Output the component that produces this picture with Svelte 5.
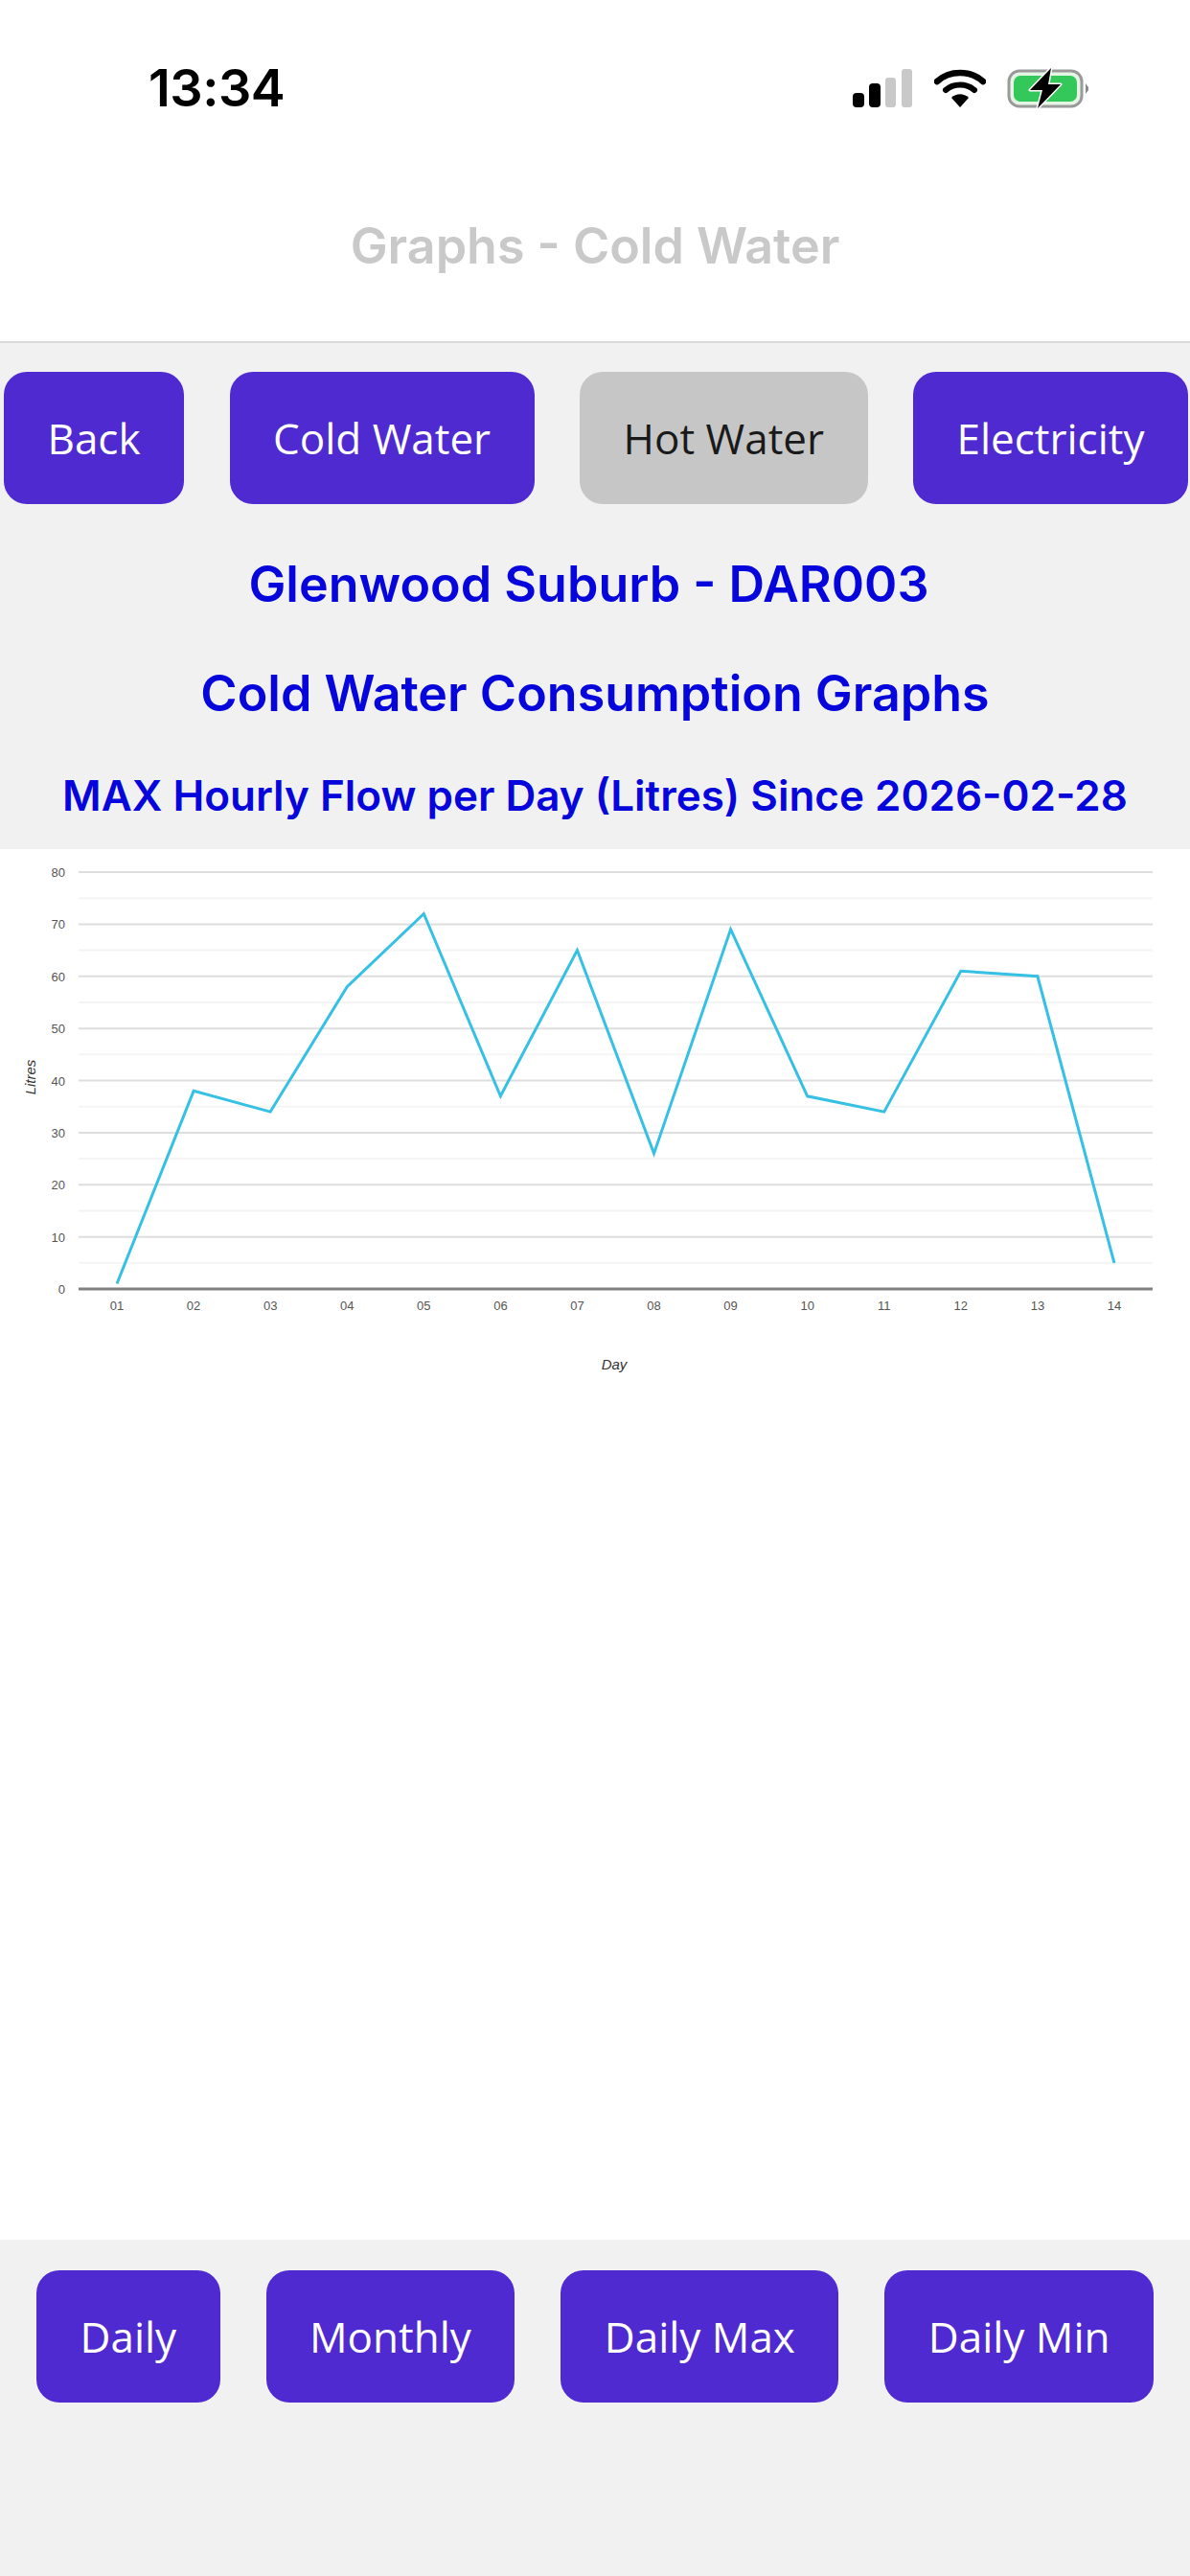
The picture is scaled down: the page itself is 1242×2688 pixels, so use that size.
<script>
	const topButtons = [
		{ label: 'Back' },
		{ label: 'Cold Water' },
		{ label: 'Hot Water', inactive: true },
		{ label: 'Electricity' }
	]
	const bottomButtons = ['Daily', 'Monthly', 'Daily Max', 'Daily Min']

	const flow = [1, 38, 34, 58, 72, 37, 65, 26, 69, 37, 34, 61, 60, 5]
	const days = flow.map((_, i) => String(i + 1).padStart(2, '0'))

	// plot area in svg pixels
	const left = 82
	const right = 1203
	const top = 24
	const bottom = 459
	const maxY = 80

	const yPos = v => bottom - (v / maxY) * (bottom - top)
	const xPos = i => left + ((right - left) / flow.length) * (i + 0.5)

	const majors = [0, 10, 20, 30, 40, 50, 60, 70, 80]
	const minors = [5, 15, 25, 35, 45, 55, 65, 75]
	const points = flow.map((v, i) => `${xPos(i)},${yPos(v)}`).join(' ')
</script>

<main>
	<div class="status">
		<span class="time">13:34</span>
		<div class="status-icons">
			<svg width="64" height="42" viewBox="0 0 64 42">
				<rect x="1" y="26" width="12" height="15" rx="4" fill="#000" />
				<rect x="18" y="16" width="12" height="25" rx="4" fill="#000" />
				<rect x="35" y="10" width="11" height="31" rx="3" fill="#c9c9c9" />
				<rect x="52" y="1" width="11" height="40" rx="3" fill="#c9c9c9" />
			</svg>
			<svg width="54" height="42" viewBox="0 0 54 42">
				<path d="M3 14 C16 2 38 2 51 14" fill="none" stroke="#000" stroke-width="6.500" stroke-linecap="round" />
				<path d="M12 23 C20 15.500 34 15.500 42 23" fill="none" stroke="#000" stroke-width="6" stroke-linecap="round" />
				<path d="M18 31 C23 26 31 26 36 31 L27 41 Z" fill="#000" />
			</svg>
			<svg width="88" height="44" viewBox="0 0 88 44">
				<rect x="2" y="4" width="76" height="37" rx="11" fill="#e4f5e6" stroke="#9a9a9a" stroke-width="3" />
				<rect x="7" y="9" width="66" height="27" rx="7" fill="#34c759" />
				<path d="M82 17 L85 21 L85 24 L82 28 Z" fill="#8a8a8a" />
				<path d="M46 1 L24 24 L37 24 L32 43 L56 18 L43 18 Z" fill="#000" stroke="#fff" stroke-width="3" stroke-linejoin="round" paint-order="stroke" />
			</svg>
		</div>
	</div>

	<header>Graphs - Cold Water</header>

	<section class="intro">
		<nav class="top-nav">
			{#each topButtons as btn}
				<button class:inactive={btn.inactive}>{btn.label}</button>
			{/each}
		</nav>
		<h1>Glenwood Suburb - DAR003&nbsp;</h1>
		<h2>Cold Water Consumption Graphs</h2>
		<h3>MAX Hourly Flow per Day (Litres) Since 2026-02-28</h3>
	</section>

	<svg class="chart" width="1242" height="560" viewBox="0 0 1242 560">
		{#each minors as v}
			<line x1={left} x2={right} y1={yPos(v)} y2={yPos(v)} class="minor" />
		{/each}
		{#each majors as v}
			{#if v > 0}
				<line x1={left} x2={right} y1={yPos(v)} y2={yPos(v)} class="major" />
			{/if}
			<text x="68" y={yPos(v) + 5} text-anchor="end">{v}</text>
		{/each}
		<line x1={left} x2={right} y1={bottom} y2={bottom} class="axis" />
		<polyline {points} />
		{#each days as day, i}
			<text x={xPos(i)} y="481" text-anchor="middle">{day}</text>
		{/each}
		<text class="title" x="641" y="543" text-anchor="middle">Day</text>
		<text class="title" transform="translate(37 238) rotate(-90)" text-anchor="middle">Litres</text>
	</svg>

	<div class="spacer"></div>

	<footer>
		{#each bottomButtons as label}
			<button>{label}</button>
		{/each}
	</footer>
</main>

<style>
	:global(body) {
		background: #fff;
	}

	main {
		width: 1242px;
		height: 2688px;
		display: flex;
		flex-direction: column;
		overflow: hidden;
	}

	.status {
		height: 184px;
		box-sizing: border-box;
		padding: 0 103px 0 155px;
		display: flex;
		justify-content: space-between;
		align-items: center;
	}

	.time {
		font: 600 54px/1 Inter, sans-serif;
		color: #000;
		letter-spacing: -0.5px;
	}

	.status-icons {
		display: flex;
		align-items: center;
		gap: 22px;
	}

	.status-icons svg {
		display: block;
	}

	header {
		height: 174px;
		box-sizing: border-box;
		padding: 37px 0 63px;
		text-align: center;
		font: 600 52px/72px Inter, sans-serif;
		color: #c9c9c9;
		border-bottom: 2px solid #d8d8d8;
	}

	.intro {
		background: #f1f1f1;
		height: 528px;
		box-sizing: border-box;
		padding-top: 30px;
		text-align: center;
		font-family: Inter, sans-serif;
		color: #0505dc;
	}

	.top-nav {
		display: flex;
		justify-content: space-between;
		padding: 0 2px 0 4px;
	}

	button {
		height: 138px;
		padding: 0 45.5px;
		border: none;
		border-radius: 24px;
		background: #4f2ad1;
		color: #fff;
		font: 400 44px/1 "Open Sans", sans-serif;
	}

	button.inactive {
		background: #c6c6c6;
		color: #1a1a1a;
	}

	h1, h2, h3 {
		margin: 0;
		font-weight: 600;
	}

	h1 {
		font-size: 52px;
		line-height: 60px;
		margin-top: 54px;
	}

	h2 {
		font-size: 52px;
		line-height: 60px;
		margin-top: 54px;
	}

	h3 {
		font-size: 44px;
		line-height: 54px;
		margin-top: 49px;
	}

	.chart {
		display: block;
		flex: none;
	}

	.chart text {
		font: 13px "Liberation Sans", sans-serif;
		fill: #555;
	}

	.chart text.title {
		font-style: italic;
		font-size: 15px;
		fill: #333;
	}

	.chart line {
		stroke-width: 2;
	}

	.minor {
		stroke: #f4f4f4;
	}

	.major {
		stroke: #dedede;
	}

	.chart line.axis {
		stroke: #808080;
		stroke-width: 3;
	}

	polyline {
		fill: none;
		stroke: #35c0e4;
		stroke-width: 3;
	}

	.spacer {
		flex: 1;
	}

	footer {
		height: 351px;
		box-sizing: border-box;
		flex: none;
		background: #f1f1f1;
		padding: 32px 38px 0;
		display: flex;
		justify-content: space-between;
		align-items: flex-start;
	}
</style>
